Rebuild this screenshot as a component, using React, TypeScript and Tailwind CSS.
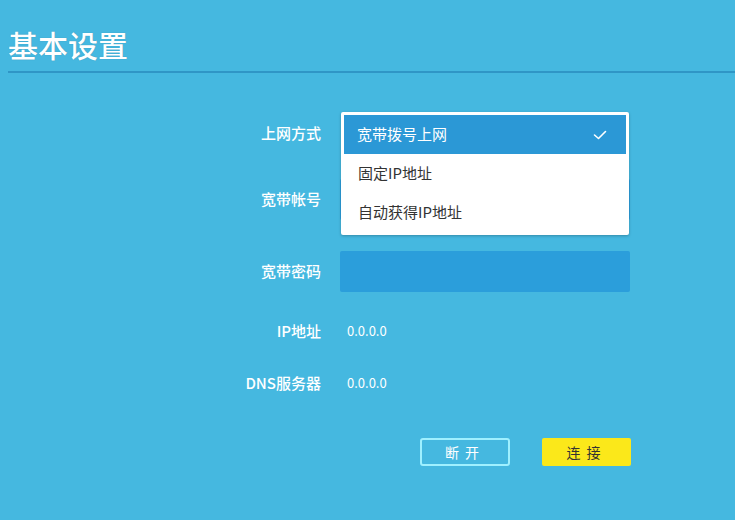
import React from 'react';

const rows = [
  { label: 'IP地址', value: '0.0.0.0' },
  { label: 'DNS服务器', value: '0.0.0.0' },
];

const font = { fontFamily: '"Noto Sans CJK SC", "Noto Sans", sans-serif' };

function Check() {
  return (
    <svg width="14" height="10" viewBox="0 0 14 10" fill="none">
      <path d="M1.5 5l4 3.5L12.5 1.5" stroke="white" strokeWidth="1.6" strokeLinecap="round" strokeLinejoin="round" />
    </svg>
  );
}

export default function App() {
  return (
    <div className="h-[520px] w-full overflow-hidden bg-[#45b8e0] text-white" style={font}>
      <div className="pl-[8px] pt-[24px]">
        <h1 className="text-[30px] leading-[40px] font-medium [text-shadow:0_0_1px_rgba(0,0,0,0.25)]">基本设置</h1>
      </div>
      <div className="ml-[8px] mt-[7px] h-[2px] bg-[#2f96c6]" />

      <div className="mt-[39px] flex flex-col">
        <div className="flex h-[42px] items-center">
          <div className="w-[321px] text-right text-[15px] font-medium">上网方式</div>
          <div className="relative ml-[20px] h-[42px] w-[288px]">
            <div className="absolute left-0 top-0 z-10 w-[288px] rounded-[2px] bg-white p-[3px] shadow-[0_1px_3px_rgba(0,0,0,0.25)]">
              <div className="flex h-[39px] items-center justify-between bg-[#2b98d6] pl-[13px] pr-[19px] text-[15px] text-white">
                <span>宽带拨号上网</span>
                <Check />
              </div>
              <div className="flex h-[39px] items-center pl-[14px] text-[15px] text-[#333]">固定IP地址</div>
              <div className="flex h-[39px] items-center pl-[14px] text-[15px] text-[#333]">自动获得IP地址</div>
            </div>
          </div>
        </div>

        <div className="mt-[25px] flex h-[41px] items-center">
          <div className="w-[321px] text-right text-[15px] font-medium">宽带帐号</div>
          <div className="ml-[19px] h-[41px] w-[290px] rounded-[2px] bg-[#2b9edb]" />
        </div>

        <div className="mt-[31px] flex h-[41px] items-center">
          <div className="w-[321px] text-right text-[15px] font-medium">宽带密码</div>
          <div className="ml-[19px] h-[41px] w-[290px] rounded-[2px] bg-[#2b9edb]" />
        </div>

        <div className="mt-[29px] flex flex-col gap-[32px]">
          {rows.map((row) => (
            <div key={row.label} className="flex h-[20px] items-center">
              <div className="w-[321px] text-right text-[15px] font-medium">{row.label}</div>
              <div className="ml-[26px] text-[13px]">{row.value}</div>
            </div>
          ))}
        </div>

        <div className="mt-[45px] flex pl-[420px]">
          <button className="h-[28px] w-[90px] rounded-[3px] border-2 border-[#9ff0ff] text-[14px] tracking-[6px] text-white">
            断开
          </button>
          <button className="ml-[32px] h-[28px] w-[89px] rounded-[2px] bg-[#fbe81a] text-[14px] tracking-[6px] text-[#333]">
            连接
          </button>
        </div>
      </div>
    </div>
  );
}
